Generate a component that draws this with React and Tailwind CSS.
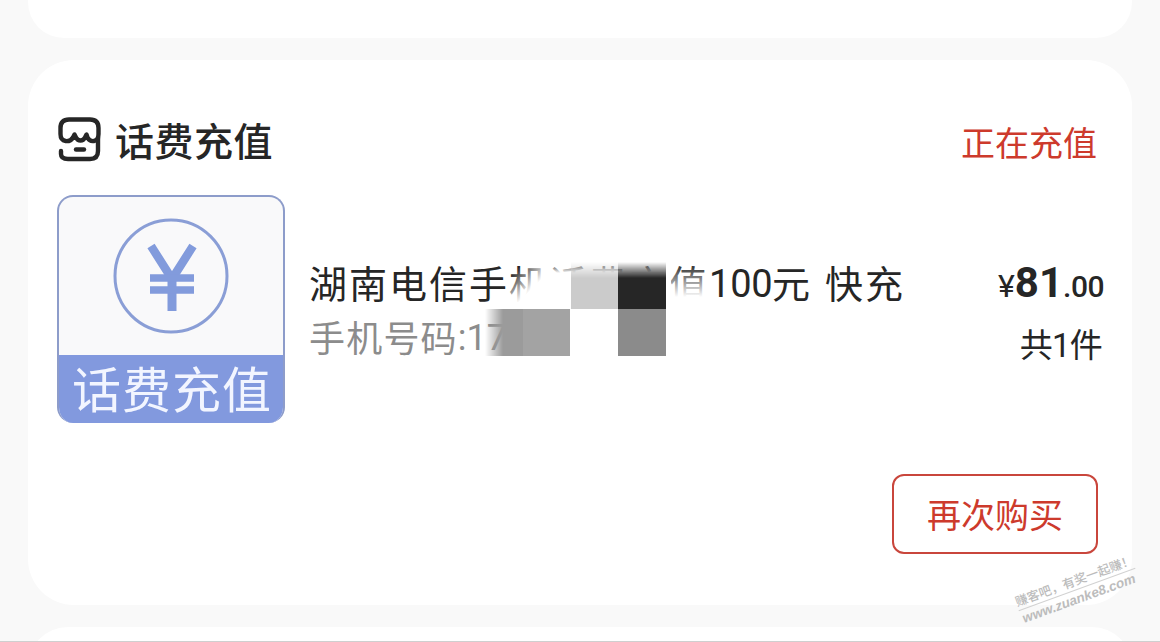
import React from 'react';

const StoreIcon = () => (
    <svg className="w-[44px] h-[46px]" viewBox="0 0 44 46" fill="none" stroke="#262626" strokeWidth="4.4" strokeLinecap="round" strokeLinejoin="round">
        <path d="M41 22V35Q41 43 33 43H11Q4 43 4 38V35" />
        <path d="M12 3.5H33Q41.500 3.5 41.500 12V18C41.500 27 33 26.500 30.500 21.500L29.500 18.500L28 21.500C26 25.500 21 25.500 19 21.500L17.500 18.500L16 21.500C13 26.500 3.500 27 3.500 18V12Q3.500 3.5 12 3.5Z" />
        <path d="M19 33.500H27" />
    </svg>
);

const YenIcon = () => (
    <svg className="w-[118px] h-[118px]" viewBox="0 0 118 118" fill="none" stroke="#829bdc">
        <circle cx="59" cy="59" r="56" strokeWidth="3" stroke="#8a9ed6" />
        <path d="M39 29L60 62L81 29" strokeWidth="8.5" />
        <path d="M60 56V94" strokeWidth="9" />
        <path d="M38 61H82M38 73H82" strokeWidth="7.500" />
    </svg>
);

const Thumbnail = () => (
    <div className="w-[228px] h-[228px] shrink-0 flex flex-col rounded-[16px] overflow-hidden border-2 border-b-0 border-[#8d9cca] bg-[#f9f9fa]">
        <div className="h-[158px] flex justify-center pt-[20px]">
            <YenIcon />
        </div>
        <div className="flex-1 flex items-center justify-center bg-[#8299de] text-[#f2f5ff] text-[49px] leading-none tracking-[1px] whitespace-nowrap pb-[5px] pl-[2px]">
            话费充值
        </div>
    </div>
);

// hides the middle of the product name and the phone number
const Mosaic = () => (
    <div className="absolute left-[176px] top-[3px] w-[226px] h-[94px]">
        <div className="absolute left-[58px] top-0 w-[128px] h-[48px] bg-white [mask-image:linear-gradient(to_bottom,transparent_1px,black_11px)]" />
        <div className="absolute left-[20px] top-[6px] w-[40px] h-[40px] bg-white [mask-image:linear-gradient(to_bottom_right,transparent_15%,black_60%)]" />
        <div className="absolute left-[184px] top-[2px] w-[38px] h-[44px] bg-linear-to-b from-transparent to-white to-75%" />
        <div className="absolute left-[86px] top-0 w-[95px] h-[47px] flex [mask-image:linear-gradient(to_bottom,transparent,black_16px)]">
            <div className="w-[47px] bg-[#cbcbcb]" />
            <div className="w-[48px] bg-[#262626]" />
        </div>
        <div className="absolute left-0 top-[47px] w-[181px] h-[47px] flex [mask-image:linear-gradient(to_right,transparent,black_18px)]">
            <div className="w-[38px] bg-[#9b9b9b]" />
            <div className="w-[47px] bg-[#a3a3a3]" />
            <div className="w-[48px] bg-white" />
            <div className="w-[48px] bg-[#8b8b8b]" />
        </div>
    </div>
);

const Watermark = () => (
    <div className="absolute left-[1015px] top-[571px] w-[124px] -rotate-[20deg] whitespace-nowrap text-[#bcbcbc]">
        <div className="border-b border-[#d2d2d2] text-[12.5px] leading-[18px] font-medium">赚客吧，有奖一起赚！</div>
        <div className="font-['Liberation_Sans'] italic font-bold text-[13.5px] leading-[18px] pl-px">www.zuanke8.com</div>
    </div>
);

const OrderCard = () => (
    <div className="h-[545px] mt-[22px] rounded-[46px] bg-white pl-[29px] pr-[28px] flex flex-col">
        <div className="mt-[54px] h-[50px] flex items-center">
            <StoreIcon />
            <span className="ml-[14px] text-[39px] leading-[50px] font-medium tracking-[0.5px]">话费充值</span>
            <span className="ml-auto mr-[7px] mt-[6px] text-[34px] leading-[50px] text-[#cd3a2c]">正在充值</span>
        </div>

        <div className="mt-[31px] flex">
            <Thumbnail />
            <div className="relative ml-[24px] mt-[64px] w-[610px] whitespace-nowrap">
                <div className="-mt-[2px] flex h-[50px] text-[38px] leading-[50px] tracking-[2px]">
                    <span className="w-[400px]">湖南电信手机话费充值</span>
                    <span className="font-['Roboto'] text-[38px] tracking-[-0.2px] w-[63px] pt-[2px]">100</span>
                    <span>元</span>
                    <span className="ml-[13px]">快充</span>
                </div>
                <div className="mt-[5px] h-[48px] flex text-[36px] leading-[48px] tracking-[1.2px] text-[#8c8c8c]">
                    <span>手机号码</span>
                    <span className="font-['Roboto'] tracking-normal pt-[2px]">:17</span>
                </div>
                <Mosaic />
            </div>
            <div className="ml-auto mt-[64px] flex flex-col items-end whitespace-nowrap">
                <div className="flex items-baseline h-[48px] leading-[48px] font-['Roboto']">
                    <span className="text-[32px]">¥</span>
                    <span className="text-[42px] font-bold">81</span>
                    <span className="text-[30px] font-medium tracking-[-0.5px]">.00</span>
                </div>
                <div className="mt-[13px] mr-[2px] h-[46px] text-[33px] leading-[46px] tracking-[-0.8px]">
                    共<span className="font-['Roboto']">1</span>件
                </div>
            </div>
        </div>

        <div className="mt-[51px] mr-[6px] flex justify-end">
            <button className="w-[206px] h-[80px] rounded-[12px] border-2 border-[#c9463c] text-[34px] leading-none text-[#cd3a2c]">
                再次购买
            </button>
        </div>
    </div>
);

export default function App() {
    return (
        <div className="relative w-[1160px] h-[642px] overflow-hidden bg-[#f9f9f9] px-[28px] text-[#262626] font-['Noto_Sans_CJK_SC',sans-serif]">
            <div className="h-[38px] rounded-b-[36px] bg-white" />
            <OrderCard />
            <div className="h-[80px] mt-[22px] rounded-[46px] bg-white" />
            <Watermark />
            <div className="absolute inset-x-0 bottom-0 h-px bg-[#cfcfcf]" />
        </div>
    );
}
